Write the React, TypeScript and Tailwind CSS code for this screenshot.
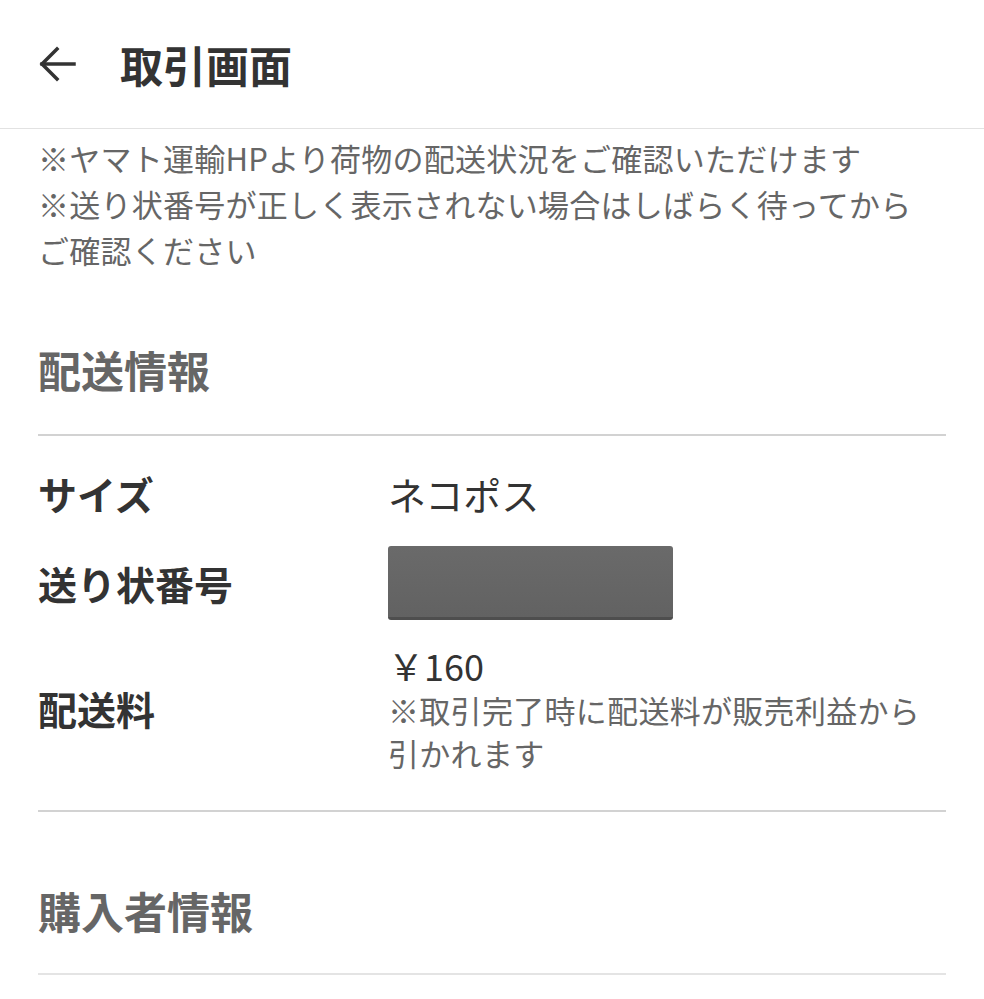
import React from "react";

const font = { fontFamily: '"Noto Sans CJK JP", "Noto Sans", sans-serif' };

function BackArrow() {
  return (
    <svg width="38" height="36" viewBox="0 0 38 36" fill="none" stroke="#333" strokeWidth="3.5" strokeLinecap="square">
      <path d="M36 18H4" />
      <path d="M19 3L4 18l15 15" />
    </svg>
  );
}

function SectionHeading({ children, className }: { children: React.ReactNode; className: string }) {
  return (
    <div className={`text-[43px] leading-[60px] font-bold text-[#666] ${className}`}>{children}</div>
  );
}

export default function App() {
  return (
    <div className="w-[984px] h-[999px] bg-white overflow-hidden text-[#333]" style={font}>
      {/* header */}
      <div className="h-[129px] flex items-center pl-[38px] border-b border-[#e2e2e2]">
        <BackArrow />
        <h1 className="ml-[44px] text-[43px] font-bold text-[#333]">取引画面</h1>
      </div>

      <div className="px-[38px]">
        <div className="pt-[6px] text-[31px] leading-[46px] text-[#666] tracking-[0.25px]">
          <p>※ヤマト運輸HPより荷物の配送状況をご確認いただけます</p>
          <p>※送り状番号が正しく表示されない場合はしばらく待ってから</p>
          <p>ご確認ください</p>
        </div>

        <SectionHeading className="pt-[66px] pb-[35px] border-b-2 border-[#d2d2d2]">配送情報</SectionHeading>

        <div className="pt-[32px] pb-[36px] border-b-2 border-[#d2d2d2]">
          <div className="flex items-center h-[50px]">
            <div className="w-[350px] text-[39px] font-bold">サイズ</div>
            <div className="text-[38px]">ネコポス</div>
          </div>
          <div className="flex items-center h-[74px] mt-[28px]">
            <div className="w-[350px] text-[39px] font-bold">送り状番号</div>
            <div className="w-[285px] h-[74px] rounded-[3px] bg-gradient-to-b from-[#6a6a6a] to-[#626262] border-b-[3px] border-[#4e4e4e]"></div>
          </div>
          <div className="flex items-center mt-[22px]">
            <div className="w-[350px] text-[39px] font-bold">配送料</div>
            <div>
              <div className="text-[36px] leading-[46px]">￥160</div>
              <div className="text-[31px] leading-[43px] text-[#666] tracking-[0.3px]">
                <p>※取引完了時に配送料が販売利益から</p>
                <p>引かれます</p>
              </div>
            </div>
          </div>
        </div>

        <SectionHeading className="pt-[68px] pb-[33px] border-b-2 border-[#e4e4e4]">購入者情報</SectionHeading>
      </div>
    </div>
  );
}
